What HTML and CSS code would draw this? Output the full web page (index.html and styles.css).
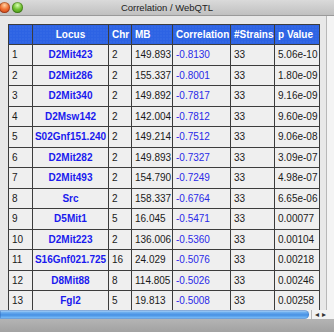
FILE: index.html
```html
<!DOCTYPE html>
<html lang="en">

<head>
    <meta charset="UTF-8">
    <title>Correlation / WebQTL</title>
    <link rel="stylesheet" href="styles.css">
</head>

<body>
    <div class="window">
        <div class="title-bar">
            <div class="lights">
                <span class="light red"></span>
                <span class="light green"></span>
            </div>
            <div class="title">Correlation / WebQTL</div>
        </div>

        <div class="content">
            <div class="main">
                <table class="corr-table">
                    <colgroup>
                        <col class="col-no">
                        <col class="col-locus">
                        <col class="col-chr">
                        <col class="col-mb">
                        <col class="col-corr">
                        <col class="col-strains">
                        <col class="col-p">
                    </colgroup>
                    <thead>
                        <tr>
                            <th></th>
                            <th class="locus">Locus</th>
                            <th>Chr</th>
                            <th>MB</th>
                            <th>Correlation</th>
                            <th>#Strains</th>
                            <th>p Value</th>
                        </tr>
                    </thead>
                    <tbody>
                        <tr><td>1</td><td class="locus"><a href="#">D2Mit423</a></td><td>2</td><td>149.893</td><td class="corr">-0.8130</td><td>33</td><td>5.06e-10</td></tr>
                        <tr><td>2</td><td class="locus"><a href="#">D2Mit286</a></td><td>2</td><td>155.337</td><td class="corr">-0.8001</td><td>33</td><td>1.80e-09</td></tr>
                        <tr><td>3</td><td class="locus"><a href="#">D2Mit340</a></td><td>2</td><td>149.892</td><td class="corr">-0.7817</td><td>33</td><td>9.16e-09</td></tr>
                        <tr><td>4</td><td class="locus"><a href="#">D2Msw142</a></td><td>2</td><td>142.004</td><td class="corr">-0.7812</td><td>33</td><td>9.60e-09</td></tr>
                        <tr><td>5</td><td class="locus"><a href="#">S02Gnf151.240</a></td><td>2</td><td>149.214</td><td class="corr">-0.7512</td><td>33</td><td>9.06e-08</td></tr>
                        <tr><td>6</td><td class="locus"><a href="#">D2Mit282</a></td><td>2</td><td>149.893</td><td class="corr">-0.7327</td><td>33</td><td>3.09e-07</td></tr>
                        <tr><td>7</td><td class="locus"><a href="#">D2Mit493</a></td><td>2</td><td>154.790</td><td class="corr">-0.7249</td><td>33</td><td>4.98e-07</td></tr>
                        <tr><td>8</td><td class="locus"><a href="#">Src</a></td><td>2</td><td>158.337</td><td class="corr">-0.6764</td><td>33</td><td>6.65e-06</td></tr>
                        <tr><td>9</td><td class="locus"><a href="#">D5Mit1</a></td><td>5</td><td>16.045</td><td class="corr">-0.5471</td><td>33</td><td>0.00077</td></tr>
                        <tr><td>10</td><td class="locus"><a href="#">D2Mit223</a></td><td>2</td><td>136.006</td><td class="corr">-0.5360</td><td>33</td><td>0.00104</td></tr>
                        <tr><td>11</td><td class="locus"><a href="#">S16Gnf021.725</a></td><td>16</td><td>24.029</td><td class="corr">-0.5076</td><td>33</td><td>0.00218</td></tr>
                        <tr><td>12</td><td class="locus"><a href="#">D8Mit88</a></td><td>8</td><td>114.805</td><td class="corr">-0.5026</td><td>33</td><td>0.00246</td></tr>
                        <tr><td>13</td><td class="locus"><a href="#">Fgl2</a></td><td>5</td><td>19.813</td><td class="corr">-0.5008</td><td>33</td><td>0.00258</td></tr>
                    </tbody>
                </table>
            </div>
            <div class="v-scroll"></div>
        </div>

        <div class="h-scroll">
            <div class="h-thumb"></div>
            <div class="h-arrows">
                <span class="arrow">&#9666;</span>
                <span class="arrow">&#9656;</span>
            </div>
        </div>

        <div class="bottom-bar"></div>
    </div>
</body>

</html>
```

FILE: styles.css
```css
body {
    margin: 0;
    font-family: 'Liberation Sans', Arial, sans-serif;
    background: #e8e8e8;
}

.window {
    display: flex;
    flex-direction: column;
    width: 334px;
    height: 332px;
    overflow: hidden;
}

/* title bar */
.title-bar {
    position: relative;
    height: 15px;
    background: linear-gradient(#dadada, #c0c0c0);
    border-bottom: 1px solid #9a9a9a;
    display: flex;
    align-items: center;
    justify-content: center;
}

.lights {
    position: absolute;
    left: -1px;
    top: 2px;
    display: flex;
    gap: 2px;
}

.light {
    width: 11px;
    height: 11px;
    border-radius: 50%;
    box-shadow: inset 0 0 0 1px rgba(0, 0, 0, 0.25);
}

.red {
    background: radial-gradient(circle at 50% 30%, #ffd0a0 0%, #f07030 45%, #c03010 100%);
}

.green {
    background: radial-gradient(circle at 50% 30%, #d8ffb0 0%, #70c030 45%, #3a8a10 100%);
}

.title {
    font-size: 9.5px;
    color: #222;
}

/* content */
.content {
    display: flex;
    height: 294px;
}

.main {
    flex: 1;
    padding: 8px 0 0 8px;
    overflow: hidden;
    background: #e8e8e8;
}

.v-scroll {
    width: 7px;
    border-left: 1px solid #b8b8b8;
    background: #f4f4f4;
}

.corr-table {
    border-collapse: collapse;
    table-layout: fixed;
    width: 311px;
    font-size: 10px;
    color: #1a1a1a;
    background: #efefef;
    border: 1px solid #3c3c3c;
}

.col-no { width: 24px; }
.col-locus { width: 76px; }
.col-chr { width: 23px; }
.col-mb { width: 41px; }
.col-corr { width: 58px; }
.col-strains { width: 44px; }
.col-p { width: 45px; }

.corr-table th,
.corr-table td {
    box-sizing: border-box;
    border: 1px solid #3c3c3c;
    padding: 0 0 0 3px;
    text-align: left;
    white-space: nowrap;
    overflow: hidden;
}

.corr-table thead tr {
    height: 20px;
}

.corr-table tbody tr {
    height: 20.5px;
}

.corr-table th {
    background-color: #2d63e4;
    background-image: radial-gradient(rgba(255, 255, 255, 0.12) 0.6px, transparent 0.8px);
    background-size: 3px 3px;
    color: #fff;
    font-weight: bold;
}

.corr-table .locus {
    text-align: center;
    padding: 0;
}

.locus a {
    color: #1a1aee;
    font-weight: bold;
    text-decoration: none;
}

.corr {
    color: #2a2ae8;
}

/* horizontal scroll bar */
.h-scroll {
    display: flex;
    height: 9px;
    background: #f2f2f2;
}

.h-thumb {
    flex: 1;
    margin-right: 2px;
    border-radius: 0 5px 5px 0;
    background: linear-gradient(#cfe6fb 0%, #6fb0f0 25%, #4690e4 55%, #72b6f4 85%, #a8d4f8 100%);
    box-shadow: inset 0 0 0 1px rgba(40, 90, 170, 0.35);
}

.h-arrows {
    display: flex;
    width: 19px;
    gap: 3px;
    align-items: center;
    font-size: 8px;
    color: #333;
    border-left: 1px solid #b8b8b8;
    padding-left: 3px;
}

.bottom-bar {
    flex: 1;
    background: linear-gradient(#b4b4b4, #a2a2a2);
}
```
